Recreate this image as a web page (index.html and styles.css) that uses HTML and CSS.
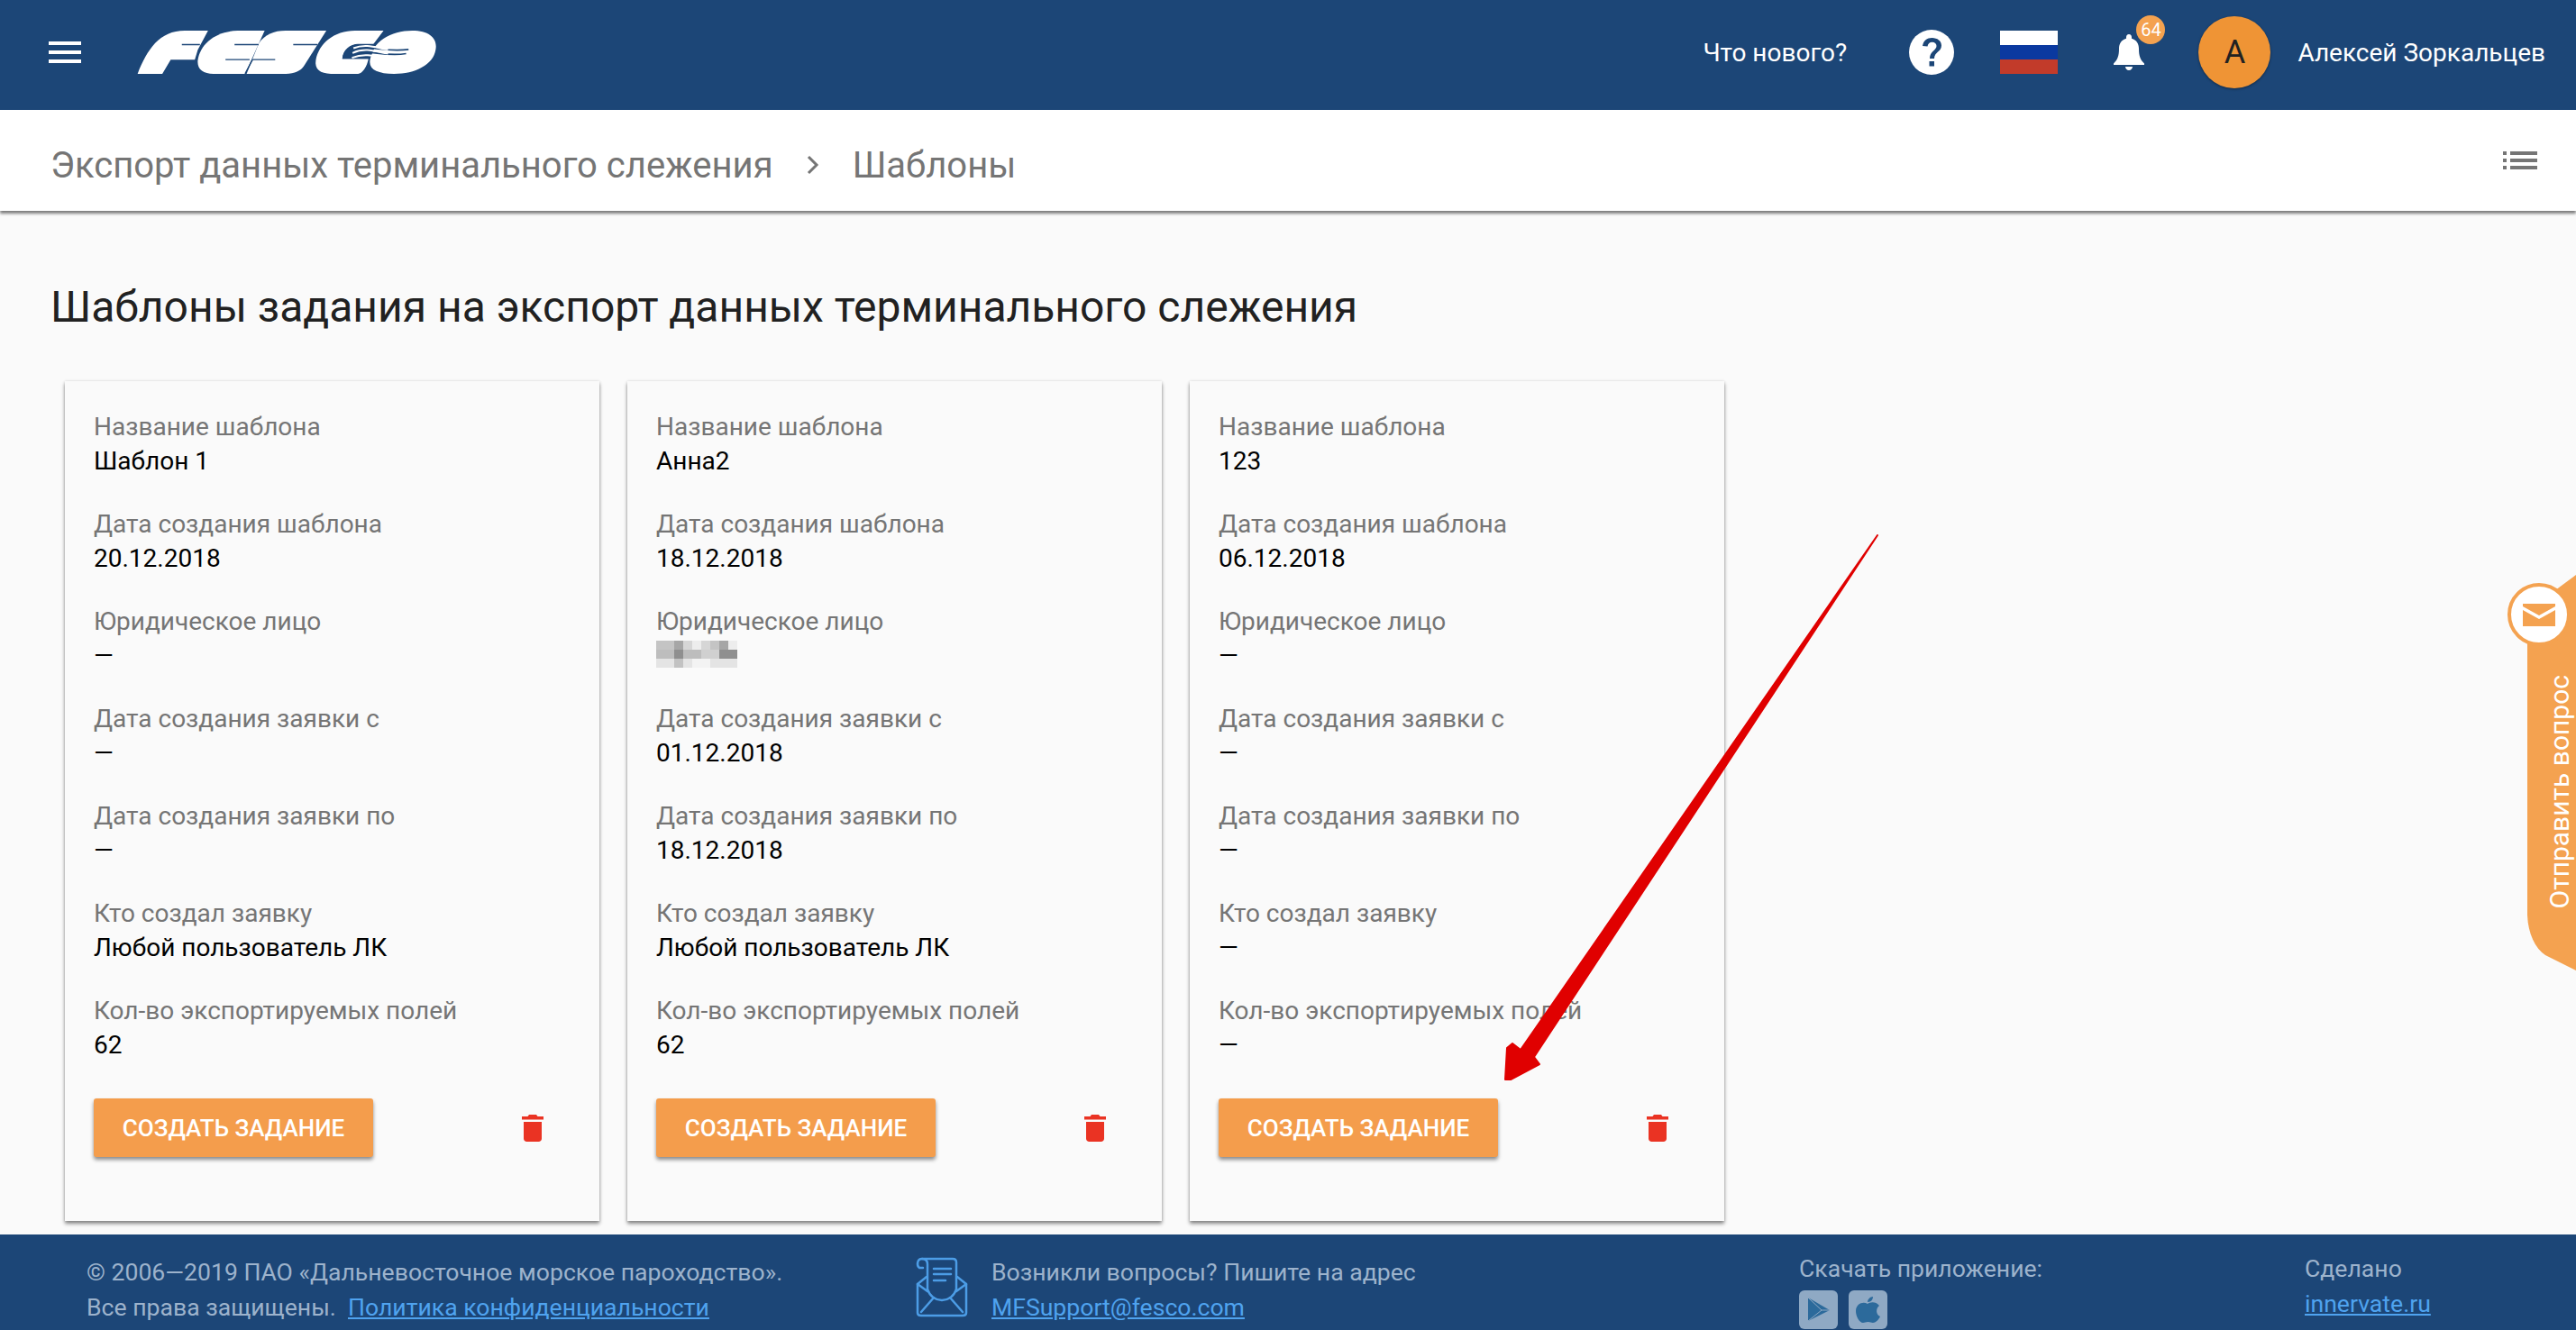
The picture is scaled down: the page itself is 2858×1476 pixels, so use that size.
FILE: index.html
```html
<!DOCTYPE html>
<html lang="ru">
<head>
    <meta charset="UTF-8">
    <title>Шаблоны</title>
    <link rel="stylesheet" href="styles.css">
</head>
<body>
    <header class="topbar">
        <svg class="burger" viewBox="0 0 36 24"><path d="M0 0h36v4H0zM0 10h36v4H0zM0 20h36v4H0z" fill="#fff"/></svg>
        <svg class="logo" viewBox="66 70 994 147">
            <g fill="#fff">
                <path d="M68 215C100 135 140 72 225 72H302L268 135 258 168H178L150 215Z"/>
                <path d="M268 170C275 115 330 72 400 72H490L425 215H320C285 215 265 200 268 170Z"/>
                <path d="M470 115C490 85 520 72 560 72H695L620 190C610 205 590 215 560 215H430Z"/>
                <path d="M660 170C670 115 720 72 790 72H885L850 118H800C770 118 750 140 748 165H835C830 190 815 215 800 215H710C675 215 655 200 660 170Z"/>
                <path d="M840 170C845 110 910 72 980 72 1040 72 1065 100 1058 135 1050 185 990 215 920 215 865 215 835 200 840 170Z"/>
            </g>
            <g fill="none" stroke="#1c4677" stroke-width="4">
                <path d="M215 118H275M390 118H470M585 118H665M360 168H440M450 168H525M425 215L450 168"/>
            </g>
            <path d="M748 165C750 135 775 116 800 116H860L840 165Z" fill="#1c4677"/>
            <g fill="none" stroke-width="5">
                <path d="M785 138C830 115 880 145 968 134" stroke="#1c4677"/>
                <path d="M780 152C830 130 880 160 960 148" stroke="#1c4677"/>
                <path d="M785 130C830 112 870 132 900 134M782 146C830 124 870 146 900 148M780 162C830 142 870 162 890 164" stroke="#fff" stroke-width="6"/>
            </g>
        </svg>
        <div class="topbar-right">
            <span class="whats-new">Что нового?</span>
            <svg class="help" viewBox="0 0 50 50">
                <circle cx="25" cy="25" r="25" fill="#fff"/>
                <path d="M15 18c1-6 5-9 10.500-9 6 0 10.500 3.500 10.500 8.500 0 7-8 7-8 14.500h-5c0-8.500 7.500-9 7.500-14 0-2.500-2-4.300-4.800-4.300-2.800 0-4.700 1.700-5.200 4.800zM22.500 35h5.500v5.500h-5.500z" fill="#1c4677"/>
            </svg>
            <div class="flag"><i class="flag-white"></i><i class="flag-blue"></i><i class="flag-red"></i></div>
            <div class="bell-wrap">
                <svg class="bell" viewBox="0 0 34 40"><path d="M17 0c2 0 3 1.500 3 3.500v1.200c5.500 1.500 8 6 8 11.300 0 8 1.500 12 6 16.500v1.500H0V32.500C4.500 28 6 24 6 16 6 10.700 8.500 6.200 14 4.700V3.500C14 1.500 15 0 17 0zM13 36h8c0 2.200-1.800 4-4 4s-4-1.800-4-4z" fill="#fff"/></svg>
                <span class="badge">64</span>
            </div>
            <div class="avatar">А</div>
            <span class="user-name">Алексей Зоркальцев</span>
        </div>
    </header>

    <div class="crumbs">
        <span>Экспорт данных терминального слежения</span>
        <svg class="crumb-arrow" viewBox="0 0 14 22"><path d="M2 2l9 9-9 9" fill="none" stroke="#757575" stroke-width="3"/></svg>
        <span>Шаблоны</span>
        <svg class="list-icon" viewBox="0 0 38 20"><path d="M0 0h4v4H0zM8 0h30v4H8zM0 8h4v4H0zM8 8h30v4H8zM0 16h4v4H0zM8 16h30v4H8z" fill="#757575"/></svg>
    </div>

    <main class="content">
        <h1>Шаблоны задания на экспорт данных терминального слежения</h1>
        <div class="cards">
            <section class="card">
                <div class="field"><label>Название шаблона</label><p>Шаблон 1</p></div>
                <div class="field"><label>Дата создания шаблона</label><p>20.12.2018</p></div>
                <div class="field"><label>Юридическое лицо</label><p>—</p></div>
                <div class="field"><label>Дата создания заявки с</label><p>—</p></div>
                <div class="field"><label>Дата создания заявки по</label><p>—</p></div>
                <div class="field"><label>Кто создал заявку</label><p>Любой пользователь ЛК</p></div>
                <div class="field"><label>Кол-во экспортируемых полей</label><p>62</p></div>
                <div class="card-actions">
                    <button class="btn">Создать задание</button>
                    <svg class="trash" viewBox="0 0 24 30"><path d="M8 0h8l1.500 2H24v3.500H0V2h6.500zM2 8h20v18.500c0 2-1.500 3.500-3.500 3.500h-13C3.500 30 2 28.500 2 26.500z" fill="#ea3323"/></svg>
                </div>
            </section>
            <section class="card">
                <div class="field"><label>Название шаблона</label><p>Анна2</p></div>
                <div class="field"><label>Дата создания шаблона</label><p>18.12.2018</p></div>
                <div class="field"><label>Юридическое лицо</label>
                    <svg class="mosaic" viewBox="0 0 9 3" shape-rendering="crispEdges">
                        <path fill="#c4c4c4" d="M0 0h2v1H0zM6 0h1v1H6z"/>
                        <path fill="#a6a6a6" d="M2 0h1v1H2zM7 0h1v1H7z"/>
                        <path fill="#ededed" d="M4 0h1v1H4zM8 0h1v1H8z"/>
                        <path fill="#d6d6d6" d="M3 0h1v1H3zM5 0h1v1H5z"/>
                        <path fill="#bdbdbd" d="M0 1h2v1H0zM3 1h2v1H3z"/>
                        <path fill="#8f8f8f" d="M2 1h1v1H2zM7 1h2v1H7z"/>
                        <path fill="#d0d0d0" d="M5 1h2v1H5z"/>
                        <path fill="#e4e4e4" d="M0 2h2v1H0zM3 2h1v1H3zM6 2h3v1H6z"/>
                        <path fill="#c2c2c2" d="M2 2h1v1H2z"/>
                        <path fill="#f3f3f3" d="M4 2h2v1H4z"/>
                    </svg>
                </div>
                <div class="field"><label>Дата создания заявки с</label><p>01.12.2018</p></div>
                <div class="field"><label>Дата создания заявки по</label><p>18.12.2018</p></div>
                <div class="field"><label>Кто создал заявку</label><p>Любой пользователь ЛК</p></div>
                <div class="field"><label>Кол-во экспортируемых полей</label><p>62</p></div>
                <div class="card-actions">
                    <button class="btn">Создать задание</button>
                    <svg class="trash" viewBox="0 0 24 30"><path d="M8 0h8l1.500 2H24v3.500H0V2h6.500zM2 8h20v18.500c0 2-1.500 3.500-3.500 3.500h-13C3.500 30 2 28.500 2 26.500z" fill="#ea3323"/></svg>
                </div>
            </section>
            <section class="card">
                <div class="field"><label>Название шаблона</label><p>123</p></div>
                <div class="field"><label>Дата создания шаблона</label><p>06.12.2018</p></div>
                <div class="field"><label>Юридическое лицо</label><p>—</p></div>
                <div class="field"><label>Дата создания заявки с</label><p>—</p></div>
                <div class="field"><label>Дата создания заявки по</label><p>—</p></div>
                <div class="field"><label>Кто создал заявку</label><p>—</p></div>
                <div class="field"><label>Кол-во экспортируемых полей</label><p>—</p></div>
                <div class="card-actions">
                    <button class="btn">Создать задание</button>
                    <svg class="trash" viewBox="0 0 24 30"><path d="M8 0h8l1.500 2H24v3.500H0V2h6.500zM2 8h20v18.500c0 2-1.500 3.500-3.500 3.500h-13C3.500 30 2 28.500 2 26.500z" fill="#ea3323"/></svg>
                </div>
            </section>
        </div>
    </main>

    <footer class="footer">
        <div class="foot-copy">
            <p>© 2006—2019 ПАО «Дальневосточное морское пароходство».</p>
            <p>Все права защищены. &nbsp;<a href="#">Политика конфиденциальности</a></p>
        </div>
        <div class="foot-ask">
            <svg class="foot-mail" viewBox="16 10 58 67" fill="none" stroke="#4c9de6" stroke-width="2.500" stroke-linecap="round" stroke-linejoin="round">
                <path d="M24 22H20C17 20 17 12 23 12H57C60 12 61 14 61 16V46"/>
                <path d="M23 12C27 12 29 14 29 18V46"/>
                <path d="M29 46C35 62 55 62 61 46"/>
                <path d="M36 23H55M36 29H55M36 36H49"/>
                <path d="M28 32L18 40V72C18 74 20 75 22 75H68C70 75 72 74 72 72V40L62 32"/>
                <path d="M18 40L29 48M72 40L61 48M22 71L36 55M68 71L54 55"/>
            </svg>
            <div>
                <p>Возникли вопросы? Пишите на адрес</p>
                <p><a href="#">MFSupport@fesco.com</a></p>
            </div>
        </div>
        <div class="foot-apps">
            <p>Скачать приложение:</p>
            <div class="app-icons">
                <span class="app-tile"><svg viewBox="0 0 43 43"><path d="M10 8L34 22 10 34z" fill="#2c6a9b"/><path d="M10 8L25 22 10 34M25 22L34 22" fill="none" stroke="#8fa9c4" stroke-width="1"/></svg></span>
                <span class="app-tile"><svg viewBox="0 0 43 43"><path d="M21 15C24 13 30 12 34 17 30 20 30 27 35 29 33 33 30 36 27 36 25 36 24 35 21.500 35S18 36 16 36C12 36 8 29 8 23 8 15 16 12 21 15ZM21 13C21 10 24 7 27 7 27 10 25 13 21 13Z" fill="#2c6a9b"/></svg></span>
            </div>
        </div>
        <div class="foot-made">
            <p>Сделано</p>
            <p><a href="#">innervate.ru</a></p>
        </div>
    </footer>

    <!-- стрелка поверх карточки -->
    <svg class="red-arrow" viewBox="0 0 2858 1476">
        <path d="M2083 594L1702 1173 1708 1181 1676 1198 1670 1198 1672 1163 1678 1158 1687 1165Z" fill="#e00000" stroke="#e00000" stroke-width="2" stroke-linejoin="round"/>
    </svg>

    <div class="ask-tab">
        <svg class="ask-shape" viewBox="0 0 54 440"><path d="M54 0V439L20 422C8 414 0 396 0 375V40Z" fill="#f4a250"/></svg>
        <span class="ask-round">
            <svg viewBox="0 0 36 25"><path d="M0 0h36v3L18 13 0 3zM0 7l18 10L36 7v18H0z" fill="#f4a250"/></svg>
        </span>
        <span class="ask-text">Отправить вопрос</span>
    </div>
</body>
</html>
```

FILE: styles.css
```css
* {
    box-sizing: border-box;
}
html, body {
    margin: 0;
    height: 1476px;
    overflow: hidden;
}
body {
    display: flex;
    flex-direction: column;
    position: relative;
    font-family: Roboto, "Liberation Sans", sans-serif;
    background-color: #fafafa;
    color: #000;
}
p {
    margin: 0;
}

/* шапка */
.topbar {
    height: 122px;
    flex: none;
    display: flex;
    align-items: center;
    padding-left: 54px;
    background-color: #1c4677;
    color: #fff;
}
.burger {
    width: 36px;
    height: 24px;
    margin-top: -6px;
}
.logo {
    width: 332px;
    height: 50px;
    margin-left: 62px;
    margin-top: -6px;
}
.topbar-right {
    margin-left: auto;
    padding-right: 34px;
    display: flex;
    align-items: center;
    font-size: 28px;
    margin-top: -6px;
}
.whats-new {
    width: 229px;
    white-space: nowrap;
}
.help {
    width: 50px;
    height: 50px;
}
.flag {
    width: 64px;
    height: 48px;
    margin-left: 51px;
    display: flex;
    flex-direction: column;
}
.flag i {
    flex: 1;
}
.flag-white { background-color: #fff; }
.flag-blue { background-color: #0a39a0; }
.flag-red { background-color: #c23b2a; }
.bell-wrap {
    position: relative;
    width: 34px;
    height: 40px;
    margin-left: 62px;
}
.bell {
    width: 34px;
    height: 40px;
    display: block;
}
.badge {
    position: absolute;
    left: 25px;
    top: -21px;
    width: 32px;
    height: 32px;
    border-radius: 50%;
    background-color: #f4a250;
    font-size: 20px;
    line-height: 32px;
    text-align: center;
}
.avatar {
    width: 80px;
    height: 80px;
    margin-left: 60px;
    border-radius: 50%;
    background-color: #ef9435;
    box-shadow: 0 1px 3px rgba(0, 0, 0, 0.4);
    color: #222;
    font-size: 36px;
    line-height: 80px;
    text-align: center;
}
.user-name {
    margin-left: 30px;
    white-space: nowrap;
}

/* хлебные крошки */
.crumbs {
    height: 112px;
    flex: none;
    display: flex;
    align-items: center;
    padding: 10px 43px 0 56px;
    background-color: #fff;
    box-shadow: 0 3px 3px rgba(0, 0, 0, 0.5);
    color: #757575;
    font-size: 40px;
    position: relative;
}
.crumb-arrow {
    width: 14px;
    height: 22px;
    margin: 0 37px 0 37px;
}
.list-icon {
    width: 38px;
    height: 20px;
    margin-left: auto;
    margin-top: -10px;
}

/* контент */
.content {
    flex: 1;
    padding: 82px 0 0 56px;
}
h1 {
    margin: 0 0 57px;
    font-size: 48px;
    line-height: 50px;
    font-weight: 400;
    color: #212121;
}
.cards {
    display: flex;
    gap: 31px;
    margin-left: 16px;
}
.card {
    width: 593px;
    height: 932px;
    padding: 32px 32px 0;
    background-color: #fafafa;
    box-shadow: 0 3px 4px rgba(0, 0, 0, 0.45), 0 0 3px rgba(0, 0, 0, 0.12);
}
.field {
    height: 108px;
}
.field label {
    display: block;
    height: 38px;
    font-size: 28px;
    line-height: 38px;
    color: #757575;
}
.field p {
    font-size: 28px;
    line-height: 38px;
}
.mosaic {
    display: block;
    width: 90px;
    height: 30px;
    margin-top: 2px;
}
.card-actions {
    display: flex;
    align-items: center;
    margin-top: 8px;
    padding-right: 30px;
    justify-content: space-between;
}
.btn {
    width: 310px;
    height: 65px;
    border: 0;
    border-radius: 3px;
    background-color: #f49d4c;
    box-shadow: 0 3px 4px rgba(0, 0, 0, 0.45);
    color: #fff;
    font-family: inherit;
    font-size: 26px;
    font-weight: 500;
    text-transform: uppercase;
}
.trash {
    width: 24px;
    height: 30px;
}

/* подвал */
.footer {
    height: 106px;
    flex: none;
    display: flex;
    padding-top: 22px;
    background-color: #1c4677;
    color: #9db3cc;
    font-size: 26.6px;
    line-height: 39px;
    overflow: hidden;
}
.footer a {
    color: #4fa3ef;
}
.foot-copy {
    width: 920px;
    margin-left: 96px;
}
.foot-ask {
    width: 980px;
    display: flex;
    gap: 26px;
}
.foot-mail {
    width: 58px;
    height: 67px;
    margin-top: 3px;
}
.foot-apps {
    width: 561px;
    margin-top: -4px;
}
.foot-made {
    margin-top: -4px;
}
.app-icons {
    display: flex;
    gap: 12px;
    margin-top: 5px;
}
.app-tile {
    width: 43px;
    height: 43px;
    border-radius: 6px;
    background-color: #8fa9c4;
}
.app-tile svg {
    display: block;
}

/* поверх страницы */
.red-arrow {
    position: absolute;
    left: 0;
    top: 0;
    width: 2858px;
    height: 1476px;
    pointer-events: none;
}
.ask-tab {
    position: absolute;
    right: 0;
    top: 638px;
    width: 54px;
    height: 440px;
}
.ask-shape {
    display: block;
    width: 54px;
    height: 440px;
}
.ask-round {
    position: absolute;
    left: -22px;
    top: 9px;
    width: 70px;
    height: 70px;
    display: flex;
    align-items: center;
    justify-content: center;
    border: 4px solid #f4a250;
    border-radius: 50%;
    background-color: #fff;
}
.ask-round svg {
    width: 36px;
    height: 25px;
}
.ask-text {
    position: absolute;
    left: 17px;
    bottom: 70px;
    writing-mode: vertical-rl;
    transform: rotate(180deg);
    color: #fff;
    font-size: 30px;
    line-height: 38px;
    white-space: nowrap;
}
```
